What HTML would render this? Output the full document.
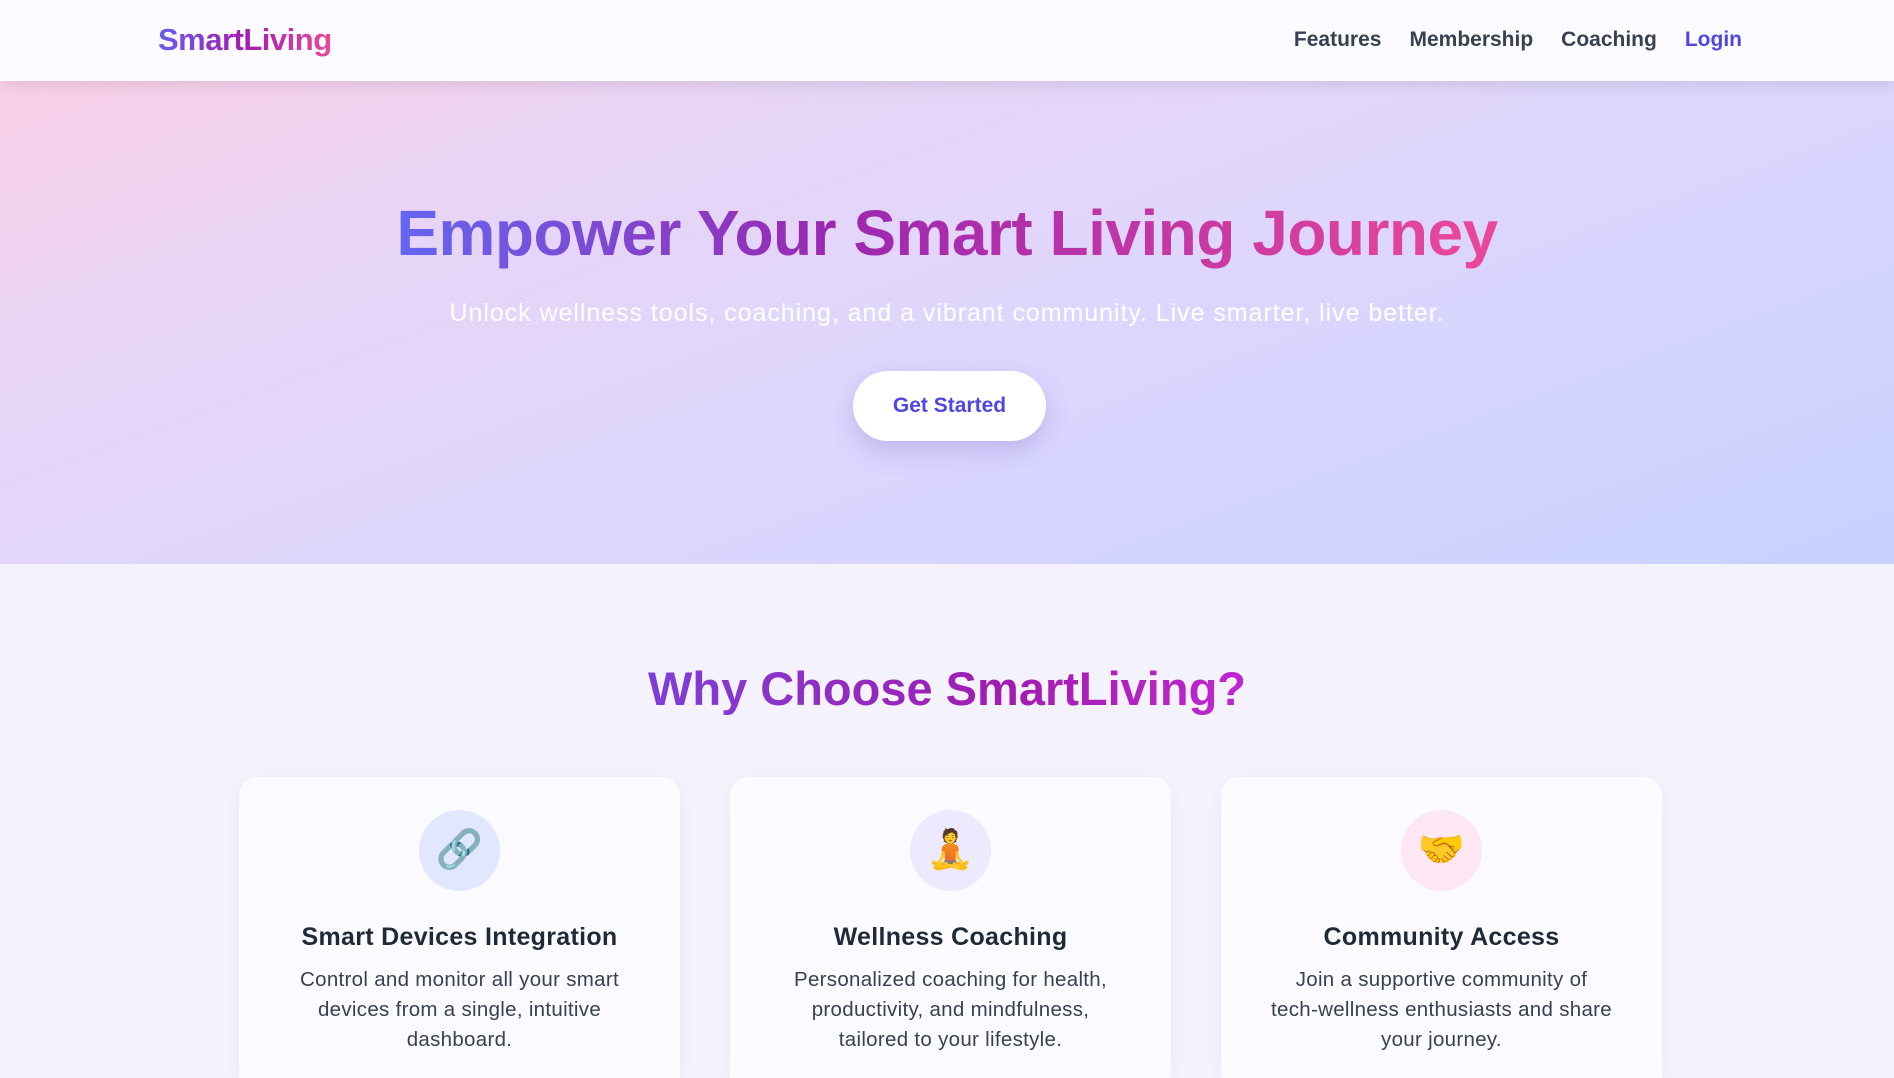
<!DOCTYPE html>
<html><head><meta charset="utf-8"><style>
*{margin:0;padding:0;box-sizing:border-box}
html,body{width:1894px;height:1078px;overflow:hidden}
body{font-family:"Liberation Sans",sans-serif;background:#f4f3fd;position:relative}
nav{position:absolute;top:0;left:0;width:1894px;height:81px;background:#fcfbff;box-shadow:0 4px 14px rgba(0,0,0,.1);z-index:2}
.logo{position:absolute;left:158px;top:22px;font-size:31px;font-weight:700;letter-spacing:-0.5px;background:linear-gradient(90deg,#6b5cf0,#a21caf,#ec4899);-webkit-background-clip:text;color:transparent}
.links{position:absolute;right:152px;top:28px;font-size:21px;font-weight:600;color:#374151}
.links span{margin-left:28px}
.hero{position:absolute;top:81px;left:0;width:1894px;height:483px;background:linear-gradient(160deg,#fbcfe8 0%,#e8d5f6 25%,#ddd6fe 55%,#c7d2fe 100%)}
h1{position:absolute;top:115px;width:100%;text-align:center;font-size:64px;font-weight:700;letter-spacing:-0.5px}
h1 span{background:linear-gradient(90deg,#6366f1,#9c27b0 40%,#ec4899);-webkit-background-clip:text;color:transparent}
.sub{position:absolute;top:218px;width:100%;text-align:center;font-size:25px;letter-spacing:0.95px;color:#fff}
.btn{position:absolute;left:853px;top:290px;width:193px;height:70px;border-radius:35px;background:#fff;box-shadow:0 10px 25px rgba(80,60,160,.2);text-align:center;line-height:70px;font-size:21px;font-weight:700;color:#4f46e5}
h2{position:absolute;top:661px;width:100%;text-align:center;font-size:47px;font-weight:700}
h2 span{background:linear-gradient(90deg,#7e3fd8,#a21caf 60%,#c026d3);-webkit-background-clip:text;color:transparent}
.card{position:absolute;top:777px;width:441px;height:301px;background:#fbfbff;border-radius:18px 18px 0 0;box-shadow:0 4px 20px rgba(100,100,200,.08);text-align:center;overflow:hidden}
.ic{width:81px;height:81px;border-radius:50%;margin:33px auto 0;font-size:38px;line-height:81px}
.card h3{margin-top:32px;font-size:25px;color:#1f2937;font-weight:700;letter-spacing:0.3px}
.card p{margin:13px auto 0;font-size:20.5px;letter-spacing:0.3px;line-height:30px;color:#374151;white-space:nowrap}
</style></head><body>
<nav><div class="logo">SmartLiving</div><div class="links"><span>Features</span><span>Membership</span><span>Coaching</span><span style="color:#4f46e5">Login</span></div></nav>
<div class="hero"><h1><span>Empower Your Smart Living Journey</span></h1>
<div class="sub">Unlock wellness tools, coaching, and a vibrant community. Live smarter, live better.</div>
<div class="btn">Get Started</div></div>
<h2><span>Why Choose SmartLiving?</span></h2>
<div class="card" style="left:239px"><div class="ic" style="background:#e0e7ff">🔗</div><h3>Smart Devices Integration</h3><p>Control and monitor all your smart<br>devices from a single, intuitive<br>dashboard.</p></div>
<div class="card" style="left:730px"><div class="ic" style="background:#ede9fe">🧘</div><h3>Wellness Coaching</h3><p>Personalized coaching for health,<br>productivity, and mindfulness,<br>tailored to your lifestyle.</p></div>
<div class="card" style="left:1221px"><div class="ic" style="background:#fce7f3">🤝</div><h3>Community Access</h3><p>Join a supportive community of<br>tech-wellness enthusiasts and share<br>your journey.</p></div>
</body></html>
